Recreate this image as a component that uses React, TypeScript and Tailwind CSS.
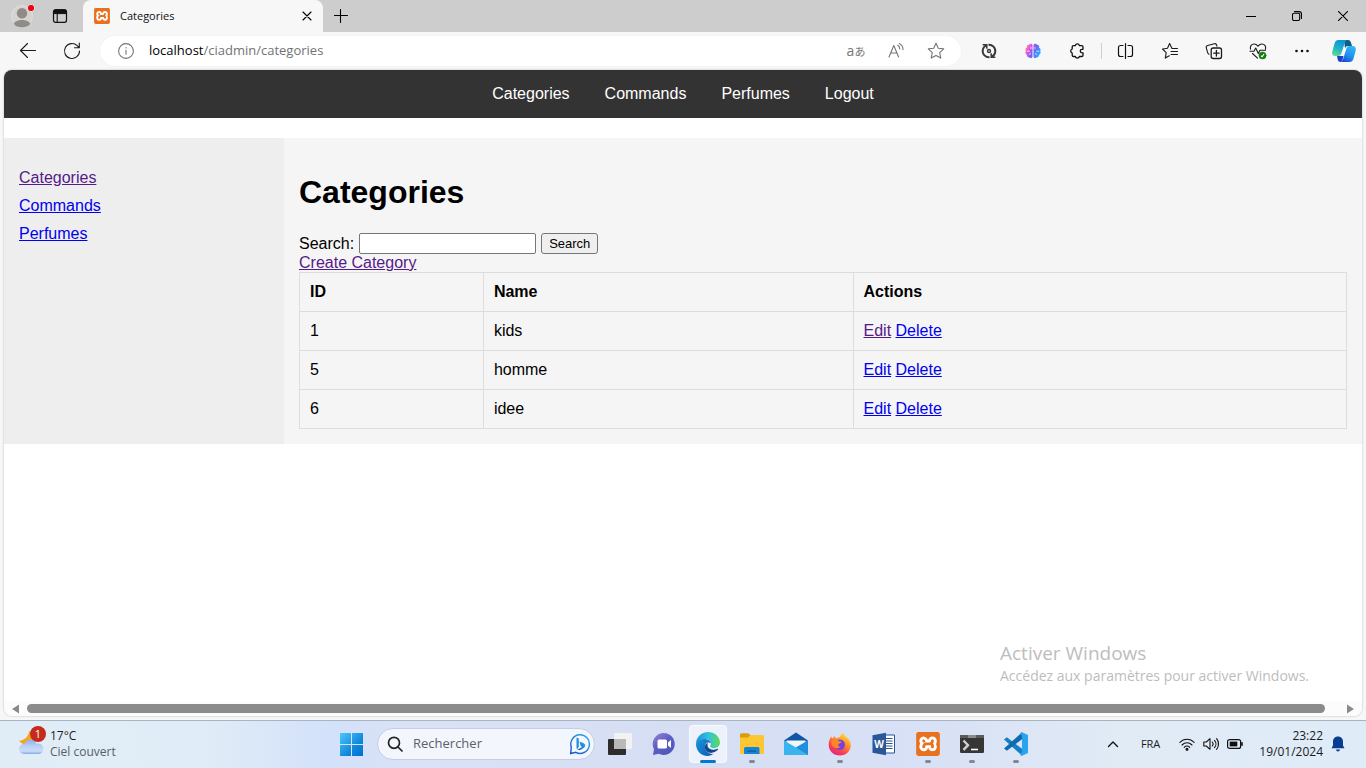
import React, { useState } from "react";
import { SiXampp } from "react-icons/si";

const uiFont = "font-['Open_Sans','Noto_Sans',sans-serif]";

type IconProps = { children: React.ReactNode; box?: string; className?: string };

function Line({ children, box = "0 0 18 18", className = "size-[18px] text-[#1b1b1b]" }: IconProps) {
  return (
    <svg viewBox={box} className={`${className} shrink-0`} fill="none" stroke="currentColor" strokeWidth="1.1" strokeLinecap="round" strokeLinejoin="round" aria-hidden="true">
      {children}
    </svg>
  );
}

function XamppLogo({ className }: { className: string }) {
  return (
    <span className={`${className} flex shrink-0 items-center justify-center bg-white`}>
      <SiXampp className="size-full text-[#e8701f]" aria-hidden="true" />
    </span>
  );
}

function TabStrip() {
  return (
    <header className="flex h-8 shrink-0 bg-[#cdcdcd]">
      <button aria-label="Profile" className="ml-[3px] flex w-[38px] items-center justify-center">
        <svg viewBox="0 0 26 26" className="size-[26px]" aria-hidden="true">
          <circle cx="13" cy="13" r="10.5" fill="#d6d3cf" stroke="#dedede" strokeWidth="1" />
          <circle cx="13" cy="10.2" r="5.2" fill="#8f8b87" />
          <path d="M4.8 21c1-3 4.600-4 8.200-4s7.200 1 8.200 4c-2 2.200-5 3.200-8.200 3.200S6.800 23.200 4.800 21z" fill="#8f8b87" />
          <circle cx="22" cy="5" r="3.700" fill="#e30613" stroke="#efe3e3" strokeWidth="1" />
        </svg>
      </button>
      <button aria-label="Tab actions" className="flex w-[38px] items-center justify-center">
        <svg viewBox="0 0 16 16" className="size-4" fill="none" stroke="#111" aria-hidden="true">
          <rect x="1.500" y="1.800" width="13" height="12.500" rx="2" strokeWidth="1.200" />
          <path d="M1.500 5.600V4c0-1.400.8-2.200 2-2.200h9c1.200 0 2 .8 2 2.200v1.600z" fill="#111" />
          <path d="M5.200 5v9" strokeWidth="1.100" />
        </svg>
      </button>
      <div className="ml-1 flex w-60 items-center rounded-t-lg bg-[#f7f7f7] pr-[7px] pl-[11px]">
        <XamppLogo className="size-4 rounded-xs" />
        <span className="ml-[10px] flex-1 text-[11px] text-[#111]">Categories</span>
        <button aria-label="Close tab" className="flex size-[18px] items-center justify-center">
          <Line box="0 0 10 10" className="size-[10px] text-black"><path d="M1 1l8 8M9 1L1 9" /></Line>
        </button>
      </div>
      <button aria-label="New tab" className="flex w-[35px] items-center justify-center">
        <Line box="0 0 14 14" className="size-[14px] text-black"><path d="M6.500 .500v13M.500 6.500h13" /></Line>
      </button>
      <div className="ml-auto flex">
        <button aria-label="Minimize" className="flex w-[46px] items-center justify-center">
          <Line box="0 0 10 10" className="size-[10px] text-black"><path d="M0 5.500h10" /></Line>
        </button>
        <button aria-label="Restore" className="flex w-[46px] items-center justify-center">
          <Line box="0 0 10 10" className="size-[10px] text-black">
            <rect x=".500" y="2.300" width="7.200" height="7.200" rx="1.500" />
            <path d="M2.500.600h4.500a2.500 2.500 0 0 1 2.500 2.500v4.400" />
          </Line>
        </button>
        <button aria-label="Close" className="flex w-[46px] items-center justify-center">
          <Line box="0 0 10 10" className="size-[10px] text-black"><path d="M.300.300l9.400 9.400M9.700.300L.300 9.700" /></Line>
        </button>
      </div>
    </header>
  );
}

function ToolButton({ label, children }: { label: string; children: React.ReactNode }) {
  return <button aria-label={label} className="flex h-8 w-11 shrink-0 items-center justify-center">{children}</button>;
}

function Toolbar() {
  return (
    <div className="flex h-[38px] shrink-0 items-center pr-[2px] pl-[6px]">
      <ToolButton label="Back">
        <Line><path d="M16.500 8.500H1.500M8.500 1.500l-7 7 7 7" /></Line>
      </ToolButton>
      <ToolButton label="Refresh">
        <Line><path d="M16.500 9a7.500 7.500 0 1 1-2.300-5.400l2 2M16.300 1v4.800h-4.800" /></Line>
      </ToolButton>
      <div className="mx-[6px] flex h-[30px] min-w-0 flex-1 items-center rounded-full bg-white pr-[5px] pl-[18px] shadow-[0_0_2px_rgba(0,0,0,0.06)]">
        <button aria-label="Site information">
          <Line box="0 0 16 16" className="size-4 text-[#767676]"><circle cx="8" cy="8" r="7.400" /><path d="M8 7.200v4M8 4.600v.3" /></Line>
        </button>
        <div role="textbox" aria-label="Address" contentEditable suppressContentEditableWarning className="ml-[15px] flex-1 text-[13px] text-[#737373] outline-none">
          <span className="text-black">localhost</span>/ciadmin/categories
        </div>
        <button aria-label="Translate" className="flex w-10 items-center justify-center text-[#767676]">
          <span className="font-['Open_Sans',sans-serif] text-sm leading-4">a</span>
          <span className="font-['Noto_Sans_CJK_JP',sans-serif] text-[11px] leading-4">あ</span>
        </button>
        <button aria-label="Read aloud" className="flex w-10 items-center justify-center">
          <Line box="0 0 16 16" className="size-4 text-[#767676]">
            <path d="M1 14L5.800 2.500l4.800 11.500M2.700 10h6.300M9.800 2.200c1.200.8 2 2.200 2 3.800M11.300.600c2.300 1.200 3.700 3.400 3.700 6" />
          </Line>
        </button>
        <button aria-label="Add to favorites" className="flex w-10 items-center justify-center">
          <Line className="size-[18px] text-[#767676]"><path d="M9 1.300l2.300 5 5.400.600-4 3.700 1.100 5.500L9 13.400l-4.800 2.700 1.100-5.500-4-3.700 5.400-.600z" /></Line>
        </button>
      </div>
      <ToolButton label="Extension">
        <svg viewBox="0 0 16 16" className="size-4" fill="none" stroke="#383838" strokeWidth="1.900" aria-hidden="true">
          <path d="M3.600 12.500A6.300 6.300 0 0 1 5.200 2.300M7.500 1.700a6.300 6.300 0 0 1 5 2M12.400 3.500a6.300 6.300 0 0 1-1.600 10.200M8.500 14.300a6.300 6.300 0 0 1-5-2" />
          <path d="M1.700 1.800H5.800V5.800M14.300 14.200H10.200V10.200" strokeWidth="1.500" />
          <circle cx="8" cy="8" r="1.500" strokeWidth="1.400" />
        </svg>
      </ToolButton>
      <ToolButton label="Brain extension">
        <svg viewBox="0 0 16 16" className="size-4" aria-hidden="true">
          <defs>
            <linearGradient id="brain" x1="0" y1="0" x2="1" y2=".5"><stop stopColor="#ff9a4a" /><stop offset=".3" stopColor="#f05be0" /><stop offset=".6" stopColor="#7a5cf5" /><stop offset="1" stopColor="#2ba5ff" /></linearGradient>
          </defs>
          <path d="M7.500 2C7.300.500 4.700.300 4 1.800 2.300 1.600 1.500 3.300 2 4.400.400 5 0 7 .900 8c-1 1.300-.500 3.300 1 3.800 0 1.700 1.200 2.800 2.700 2.600 1 1.400 2.900.800 2.900-.900zM8.500 2c.2-1.500 2.800-1.700 3.500-.2 1.700-.2 2.500 1.500 2 2.600 1.600.600 2 2.600 1.100 3.600 1 1.300.500 3.300-1 3.800 0 1.700-1.200 2.800-2.700 2.600-1 1.400-2.900.800-2.900-.900z" fill="url(#brain)" />
          <path d="M1.800 8.200h3M5 5h2.300M4 11.500l2-1M14.200 8.200h-3M11 5H8.800M12 11.500l-2-1" stroke="#f8e9ff" strokeWidth=".8" fill="none" />
        </svg>
      </ToolButton>
      <ToolButton label="Extensions">
        <Line box="0 0 16 16" className="size-4 text-[#111]">
          <path strokeWidth="1.300" d="M6.300 2.600a2.100 2.100 0 0 1 4.100 0h2.300a1.300 1.300 0 0 1 1.300 1.300v2.400h-1a1.700 1.700 0 0 0 0 3.500h1v2.400a1.300 1.300 0 0 1-1.300 1.300h-2.300a2.100 2.100 0 0 1-4.100 0H4.500a1.300 1.300 0 0 1-1.300-1.300V10a2.100 2.100 0 0 1 0-4V3.900a1.300 1.300 0 0 1 1.300-1.300z" />
        </Line>
      </ToolButton>
      <div className="mx-[2px] h-4 w-px bg-[#cfcfcf]" />
      <ToolButton label="Split screen">
        <Line className="size-[18px] text-[#111]"><path strokeWidth="1.200" d="M6 3.500H3.500a2 2 0 0 0-2 2v7a2 2 0 0 0 2 2H6M11 3.500h2.500a2 2 0 0 1 2 2v7a2 2 0 0 1-2 2H11M8.500 1.500v15" /></Line>
      </ToolButton>
      <ToolButton label="Favorites">
        <Line><path d="M10.800 6L8.600 1.500 6.500 6.300l-5 .700 3.700 3.600-.9 5.500 4-2.300M11 6.500h5.500M10 9.500h6.500M10 12.500h6.500" /></Line>
      </ToolButton>
      <ToolButton label="Collections">
        <Line>
          <rect x="6.200" y="6" width="10.300" height="10.500" rx="2" strokeWidth="1.300" />
          <path d="M11.400 8.500v5.500M8.700 11.200h5.400" strokeWidth="1.300" />
          <path d="M4 12.300C3 12 2.800 11.300 2.500 10.200L1.300 5.800c-.3-1.200.3-2 1.400-2.300l6.600-1.800c1.100-.3 2 .2 2.300 1.300l.3 1.200" />
        </Line>
      </ToolButton>
      <ToolButton label="Browser essentials">
        <Line>
          <path d="M1.500 7.200C.700 4 2.700 2 5 2c1.600 0 2.800.7 4 2.200C10.200 2.700 11.400 2 13 2c2.300 0 4.300 2 3.500 5.200M1 9.200h4l1.700-3.200 2.600 5.500 1.700-3.300h5.500M3.500 11.500l5 4.700" />
          <circle cx="13.500" cy="13.500" r="3.600" fill="#107c10" stroke="#107c10" strokeWidth=".5" />
          <path d="M12.200 14l1 .8 1.600-2.400" stroke="#fff" />
        </Line>
      </ToolButton>
      <ToolButton label="Settings and more">
        <svg viewBox="0 0 14 4" className="h-1 w-[14px]" fill="#111" aria-hidden="true"><circle cx="1.500" cy="2" r="1.300" /><circle cx="7" cy="2" r="1.300" /><circle cx="12.500" cy="2" r="1.300" /></svg>
      </ToolButton>
      <button aria-label="Copilot" className="flex w-10 shrink-0 items-center justify-center">
        <svg viewBox="0 0 24 24" className="size-6" aria-hidden="true">
          <defs>
            <linearGradient id="cpA" x1=".5" y1="0" x2=".2" y2="1"><stop stopColor="#1291d8" /><stop offset=".5" stopColor="#20b3c5" /><stop offset="1" stopColor="#62dd92" /></linearGradient>
            <linearGradient id="cpB" x1=".8" y1="0" x2=".2" y2="1"><stop stopColor="#38b8f5" /><stop offset=".6" stopColor="#1d8bf0" /><stop offset="1" stopColor="#1a43cf" /></linearGradient>
          </defs>
          <path d="M12 1h4c1.800 0 2.600 1.200 3 2.700L20 7h-4c-2 0-2.500 1-3 2.500z" fill="#0b6088" />
          <path d="M6.500 1H15c-1.500.600-2 2-2.500 3.500l-3 9.500c-.5 1.800-1.500 3-3.500 3H3.200C.500 17-.300 14.800.300 12.500l2.200-8C3.200 2 4.500 1 6.500 1z" fill="url(#cpA)" />
          <path d="M17.500 23H8.500c1.500-.6 2.300-2 2.800-3.500l3-9.500c.5-1.800 1.500-3 3.500-3h3c2.700 0 3.500 2.200 2.900 4.500l-2.200 8c-.7 2.500-2 3.500-4 3.500z" fill="url(#cpB)" />
          <path d="M6 17h5.500L11 19c-.5 1.800-1 3.500-2.500 3.900C6 23 6 21 5.500 19.500L5 17z" fill="#1740cc" />
        </svg>
      </button>
    </div>
  );
}

const rows = [
  { id: 1, name: "kids", visited: true },
  { id: 5, name: "homme", visited: false },
  { id: 6, name: "idee", visited: false },
];
const visitedLink = "text-[#551a8b] underline";
const plainLink = "text-[#0000ee] underline";

function Page() {
  const [query, setQuery] = useState("");
  return (
    <div className="relative mx-1 mb-1 flex min-h-0 flex-1 flex-col overflow-hidden rounded-lg bg-white font-['Liberation_Sans',Arial,sans-serif] text-base leading-[18px] text-black shadow-[0_0_2px_rgba(0,0,0,0.3)]">
      <nav className="flex h-12 shrink-0 items-center justify-center gap-[5px] bg-[#333] text-white">
        {["Categories", "Commands", "Perfumes", "Logout"].map((item) => (
          <a key={item} href="#" className="px-[15px]">{item}</a>
        ))}
      </nav>
      <div className="mt-5 flex">
        <aside className="w-[280px] shrink-0 bg-[#eee] p-[15px]">
          <ul className="mt-4 flex flex-col gap-[10px]">
            <li><a href="#" className={visitedLink}>Categories</a></li>
            <li><a href="#" className={plainLink}>Commands</a></li>
            <li><a href="#" className={plainLink}>Perfumes</a></li>
          </ul>
        </aside>
        <main className="flex-1 bg-[#f5f5f5] p-[15px]">
          <h1 className="mt-[21px] mb-[22px] text-[32px] leading-[37px] font-bold">Categories</h1>
          <form className="flex items-center gap-[5px]" onSubmit={(e) => e.preventDefault()}>
            <label htmlFor="search" className="leading-5">Search:</label>
            <input id="search" value={query} onChange={(e) => setQuery(e.target.value)} className="h-[21px] w-[177px] rounded-xs border border-[#767676] bg-white px-[2px] text-[13px]" />
            <button type="submit" className="h-[21px] rounded-[3px] border border-[#767676] bg-[#efefef] px-[7px] text-[13px]">Search</button>
          </form>
          <a href="#" className={`${visitedLink} block w-fit`}>Create Category</a>
          <table className="w-full border-collapse text-left">
            <thead>
              <tr>
                {["ID", "Name", "Actions"].map((h) => (
                  <th key={h} className="border border-[#ddd] p-[10px] font-bold">{h}</th>
                ))}
              </tr>
            </thead>
            <tbody>
              {rows.map((row) => (
                <tr key={row.id}>
                  <td className="border border-[#ddd] p-[10px]">{row.id}</td>
                  <td className="border border-[#ddd] p-[10px]">{row.name}</td>
                  <td className="border border-[#ddd] p-[10px]">
                    <a href="#" className={row.visited ? visitedLink : plainLink}>Edit</a>{" "}
                    <a href="#" className={plainLink}>Delete</a>
                  </td>
                </tr>
              ))}
            </tbody>
          </table>
        </main>
      </div>
      <div className={`${uiFont} pointer-events-none absolute right-[49px] bottom-[29px] w-[313px] text-[#bdbdbd]`}>
        <p className="text-[19px] leading-6">Activer Windows</p>
        <p className="text-sm leading-[22px] whitespace-nowrap">Accédez aux paramètres pour activer Windows.</p>
      </div>
      <div className="mt-auto flex h-[15px] shrink-0 items-center gap-2 bg-[#fcfcfc] px-2">
        <svg viewBox="0 0 7 10" className="h-[10px] w-[7px]" fill="#8a8a8a" aria-hidden="true"><path d="M7 .500v9L0 5z" /></svg>
        <div className="mr-[14px] h-[9px] flex-1 rounded-full bg-[#8b8b8b]" />
        <svg viewBox="0 0 7 10" className="h-[10px] w-[7px]" fill="#8a8a8a" aria-hidden="true"><path d="M0 .500v9L7 5z" /></svg>
      </div>
    </div>
  );
}

function AppButton({ label, active, running, children }: { label: string; active?: boolean; running?: boolean; children: React.ReactNode }) {
  return (
    <button aria-label={label} className="relative flex h-12 w-11 items-center justify-center">
      {active && <span className="absolute inset-x-[3px] top-[5px] h-[38px] rounded-sm border border-white/60 bg-[#edf1fb]" />}
      <span className="relative flex size-6 items-center justify-center">{children}</span>
      {active && <span className="absolute bottom-[5px] h-[3px] w-4 rounded-full bg-[#0078d4]" />}
      {running && <span className="absolute bottom-[5px] h-[3px] w-[6px] rounded-full bg-[#83878f]" />}
    </button>
  );
}

const art = "size-6";

function Taskbar() {
  return (
    <footer className={`${uiFont} grid h-12 shrink-0 grid-cols-[1fr_auto_1fr] bg-[linear-gradient(90deg,#e1edf6_0%,#e0ecf7_15%,#d3e1fa_24%,#d9e2f7_30%,#d6def4_50%,#d8e1f5_68%,#e0ebf6_82%,#dfebf7_100%)] text-xs text-[#1b1b1b] shadow-[inset_0_1px_0_#a9b4c2]`}>
      <button className="flex w-fit items-center pl-[18px] text-left">
        <svg viewBox="0 0 28 38" className="h-[38px] w-7" aria-hidden="true">
          <defs><linearGradient id="cloud" x1="0" y1="0" x2="0" y2="1"><stop stopColor="#8fb0ea" /><stop offset=".45" stopColor="#b9d0f7" /><stop offset=".8" stopColor="#c9dcfb" /><stop offset="1" stopColor="#86a5e3" /></linearGradient></defs>
          <path d="M11 6c-.3 5.500-4 9-10 10 2 2.500 5 3.500 8 3.500 5 0 7-6 5-11z" fill="#f5a51d" />
          <path d="M6 29a5 5 0 0 1 0-10h.6a6 5.500 0 0 1 11.500-.5H20.500a4.800 5.200 0 0 1 0 10.500z" fill="url(#cloud)" />
          <circle cx="20" cy="9" r="8" fill="#c42b1c" />
          <text x="20" y="13" textAnchor="middle" fontSize="11" fill="#fff">1</text>
        </svg>
        <span className="ml-1 flex flex-col leading-4">
          <span>17°C</span>
          <span className="text-[#565d66]">Ciel couvert</span>
        </span>
      </button>
      <div className="flex items-center pl-[2px]">
        <button aria-label="Start" className="flex h-12 w-11 items-center justify-center">
          <svg viewBox="0 0 24 24" className={art} aria-hidden="true">
            <defs><linearGradient id="win" x1="0" y1="0" x2="1" y2="1"><stop stopColor="#4cc8fb" /><stop offset=".6" stopColor="#1389dd" /><stop offset="1" stopColor="#0070cc" /></linearGradient></defs>
            <path d="M0 1h11v11H0zM12 1h11v11H12zM0 13h11v11H0zM12 13h11v11H12z" fill="url(#win)" />
          </svg>
        </button>
        <label className="mx-[3px] flex h-8 w-[218px] items-center rounded-full border border-[#c5cee0] bg-[#f3f6fd] pr-[3px] pl-[9px]">
          <svg viewBox="0 0 16 16" className="size-4 shrink-0" fill="none" stroke="#222" strokeWidth="1.700" strokeLinecap="round" aria-hidden="true"><circle cx="7" cy="6.800" r="5.500" /><path d="M11 11l4 4" /></svg>
          <input aria-label="Rechercher" placeholder="Rechercher" className="ml-[10px] w-0 flex-1 bg-transparent text-[13px] outline-none placeholder:text-[#5c6068]" />
          <svg viewBox="0 0 22 22" className="size-[22px] shrink-0" aria-hidden="true">
            <defs><linearGradient id="bing" x1="1" y1="0" x2="0" y2="1"><stop stopColor="#27b3ea" /><stop offset="1" stopColor="#174ec4" /></linearGradient></defs>
            <path d="M1.700 20.500l.6-6.500a9.300 9.300 0 1 1 4.500 5.300z" fill="#f5f9ff" stroke="url(#bing)" strokeWidth="1.400" />
            <path d="M7.500 4.500l2.300.9v8.400l-1.500 2.400c-.6-.4-.8-.8-.8-1.500z" fill="#1f8fe6" />
            <path d="M10.500 8.500l3.800 1.500c2.200 1 2.500 3 1 4.500l-3.200 2c-1.600.9-3 .7-4-.4 1.500.3 3-1 5-2.200l-1.500-1.200z" fill="url(#bing)" />
          </svg>
        </label>
        <AppButton label="Task view">
          <svg viewBox="0 0 24 24" className={art}><rect x="0" y="7" width="18" height="16" rx="1" fill="#2d2d2d" /><rect x="6" y="1" width="18" height="16" rx="1" fill="#f2f2f2" /><path d="M6 7h12v10H6z" fill="#b9b9b9" /></svg>
        </AppButton>
        <AppButton label="Chat">
          <svg viewBox="0 0 24 24" className={art}>
            <defs><linearGradient id="chat" x1="0" y1="0" x2=".7" y2="1"><stop stopColor="#a283cf" /><stop offset=".5" stopColor="#5d5fc7" /><stop offset="1" stopColor="#5156b9" /></linearGradient></defs>
            <path d="M12 1a11 11 0 1 1-5.300 20.800L1 23l1-5.800A11 11 0 0 1 12 1z" fill="url(#chat)" />
            <rect x="5.500" y="7.500" width="9.500" height="9" rx="1.500" fill="#fff" /><path d="M16 10.500l3-2.500v8l-3-2.500z" fill="#fff" />
          </svg>
        </AppButton>
        <AppButton label="Microsoft Edge" active>
          <svg viewBox="0 0 24 24" className={art}>
            <defs>
              <linearGradient id="edA" x1="0" y1=".5" x2="1" y2=".5"><stop stopColor="#1c8fdc" /><stop offset=".5" stopColor="#2fc2df" /><stop offset="1" stopColor="#62d957" /></linearGradient>
              <linearGradient id="edB" x1="0" y1="0" x2="1" y2="1"><stop stopColor="#1893de" /><stop offset="1" stopColor="#0f5baa" /></linearGradient>
            </defs>
            <path d="M0 12C0 5 5.500 0 12 0s12 4.800 12 10.500c0 3.300-2.600 5.500-5.700 5.500-2.700 0-4.300-1-4.300-1.800 0-.7.900-.9.900-2.700 0-2.500-2.300-4.500-5.700-4.500C4.500 7 1.500 9 0 12z" fill="url(#edA)" />
            <path d="M0 12c1.500-3.700 5-5 8.500-5 4 0 6.400 2.200 6.400 4.500-2.400-2-6-.5-6 3.300 0 4.200 4 7.800 8.600 7-2 1.500-4 2.200-6 2.200C5 24 0 18.500 0 12z" fill="url(#edB)" />
            <path d="M12 11c-2.500.5-3.400 2.500-3.100 4.800.6 4.700 5.700 6.200 9.600 4.300 1.500-.700 3-1.800 3.700-2.800.4-.6-.2-.8-.7-.5-4 2-9 .8-9.800-2.200-.3-1.300-.1-2.600.3-3.600z" fill="#114a8b" />
          </svg>
        </AppButton>
        <AppButton label="File Explorer" running>
          <svg viewBox="0 0 24 24" className={art}><path d="M0 3c0-1 .6-1.700 1.600-1.700H8L10.500 3v3H0z" fill="#dc9a0c" /><path d="M0 5.500h8L10.500 3h12c1 0 1.500.6 1.500 1.500v16c0 1-.6 1.500-1.500 1.500h-21C.600 22 0 21.500 0 20.500z" fill="#fdc733" /><path d="M4 22v-5c0-1.400.8-2 2-2h11.500c1.200 0 2 .6 2 2v5z" fill="#1683d3" /><path d="M7.500 18.500h8.500v1.300H7.500z" fill="#0b5da7" /></svg>
        </AppButton>
        <AppButton label="Mail">
          <svg viewBox="0 0 24 24" className={art}><path d="M0 8.500L12 .500l12 8L12 16z" fill="#1058a5" /><path d="M2.500 8.500h19V12L12 17l-9.500-5z" fill="#f1f6fb" /><path d="M0 8.500l12 7 12-7V23H0z" fill="#39b4ee" /><path d="M12 15.500l12-7V23z" fill="#218fdb" /></svg>
        </AppButton>
        <AppButton label="Firefox" running>
          <svg viewBox="0 0 24 24" className={art}>
            <defs><linearGradient id="ff" x1=".8" y1="0" x2=".2" y2="1"><stop stopColor="#fff04a" /><stop offset=".35" stopColor="#ff9a25" /><stop offset=".7" stopColor="#fb4151" /><stop offset="1" stopColor="#d82689" /></linearGradient></defs>
            <path d="M15 .3c1 3.600 4.200 4.600 6 7.200 4.700 7-.5 16-9 16C5 23.500.7 18.500.7 13c0-3.700 1-6.500 2.600-8.500l.9 2.200L6.500 4l1.300 2.200c3-.2 5-1.500 5.200-3.200z" fill="url(#ff)" />
            <circle cx="11.800" cy="12.800" r="5.200" fill="#7543d9" />
            <path d="M3.200 9c3-2.300 5.800-1.800 7.800.3 1.200 0 2.500.1 2.500.8 0 1-2 1-3 2-1 1.200.200 3 2 3-3 2.400-7 1-9-2z" fill="#ff8727" />
          </svg>
        </AppButton>
        <AppButton label="Word">
          <svg viewBox="0 0 24 24" className={art}><path d="M12 3h10.500v18H12z" fill="#fff" stroke="#2b579a" /><path d="M14 6.500h6.500M14 9h6.500M14 11.500h6.500M14 14h6.500M14 16.500h6.500" stroke="#2b579a" strokeWidth="1" /><path d="M.500 3.200L14 .700v22.600L.500 20.800z" fill="#2b579a" /><text x="7.200" y="15.500" textAnchor="middle" fontSize="10" fontWeight="700" fill="#fff">W</text></svg>
        </AppButton>
        <AppButton label="XAMPP" running><XamppLogo className="size-6 rounded-[3px]" /></AppButton>
        <AppButton label="Terminal" running>
          <svg viewBox="0 0 24 24" className={art}><rect y="3" width="24" height="18" rx="1.200" fill="#363636" /><path d="M0 6V4.200C0 3.400.500 3 1.200 3h21.600c.7 0 1.200.4 1.200 1.200V6z" fill="#5b5b5b" /><path d="M8 3h8v3H8z" fill="#8b8b8b" /><path d="M3.500 8.500l4.500 4.700-4.500 4.700" fill="none" stroke="#d0d0d0" strokeWidth="2.400" /><path d="M11 17.500h7" stroke="#fff" strokeWidth="1.600" /></svg>
        </AppButton>
        <AppButton label="Visual Studio Code" running>
          <svg viewBox="0 0 24 24" className={art}><path d="M0 7.500l2.800-2.200L18 16.700V23.500z" fill="#147fc5" /><path d="M0 16.500l2.800 2.200L18 7.300V.500z" fill="#0d6cae" /><path d="M17.500 0L24 3v18l-6.500 3-1.300-1.200L18 20V4l-1.800-2.800z" fill="#2aa4ee" /></svg>
        </AppButton>
      </div>
      <div className="flex items-center justify-end pr-[21px]">
        <button aria-label="Show hidden icons" className="mr-[22px]"><Line box="0 0 12 12" className="size-3 text-[#111]"><path d="M1.500 8.500L6 4l4.500 4.500" strokeWidth="1.400" /></Line></button>
        <button className="mr-[19px] text-[11px]">FRA</button>
        <button aria-label="Network, volume and battery" className="mr-4 flex items-center gap-2">
          <Line box="0 0 16 16" className="size-4 text-[#111]"><path d="M.8 6.500C4.800 2.200 11.200 2.200 15.200 6.500M3 9c2.900-3 7.100-3 10 0M5.200 11.300c1.600-1.700 4-1.700 5.600 0" /><circle cx="8" cy="13.300" r="1" fill="currentColor" /></Line>
          <Line box="0 0 16 16" className="size-4 text-[#111]"><path d="M.8 6h2.500L7 2.700v10.600L3.300 10H.8zM9.300 6c.9 1.100.9 2.900 0 4M11.500 4.300c1.900 2.100 1.900 5.300 0 7.400M13.600 2.700c2.500 3 2.500 7.600 0 10.600" /></Line>
          <Line box="0 0 16 16" className="size-4 text-[#111]"><rect x=".6" y="3.600" width="13" height="8.800" rx="2" strokeWidth="1.200" /><rect x="2.700" y="5.600" width="7.600" height="4.800" fill="currentColor" stroke="none" /><path d="M15 6.800v2.400" strokeWidth="1.600" /></Line>
        </button>
        <button className="mr-2 flex flex-col text-right leading-4"><span className="w-full">23:22</span><span>19/01/2024</span></button>
        <button aria-label="Notifications">
          <svg viewBox="0 0 14 16" className="h-4 w-[14px]" fill="#083c91" aria-hidden="true"><path d="M7 .500c3 0 5 2.200 5 5v4l1.500 2.700H.500L2 9.500v-4c0-2.800 2-5 5-5zM5 13.500h4c-.2 1.300-1 2-2 2s-1.800-.7-2-2z" /></svg>
        </button>
      </div>
    </footer>
  );
}

export default function App() {
  return (
    <div className={`${uiFont} flex h-screen flex-col overflow-hidden bg-[#f7f7f7]`}>
      <TabStrip />
      <Toolbar />
      <Page />
      <Taskbar />
    </div>
  );
}
